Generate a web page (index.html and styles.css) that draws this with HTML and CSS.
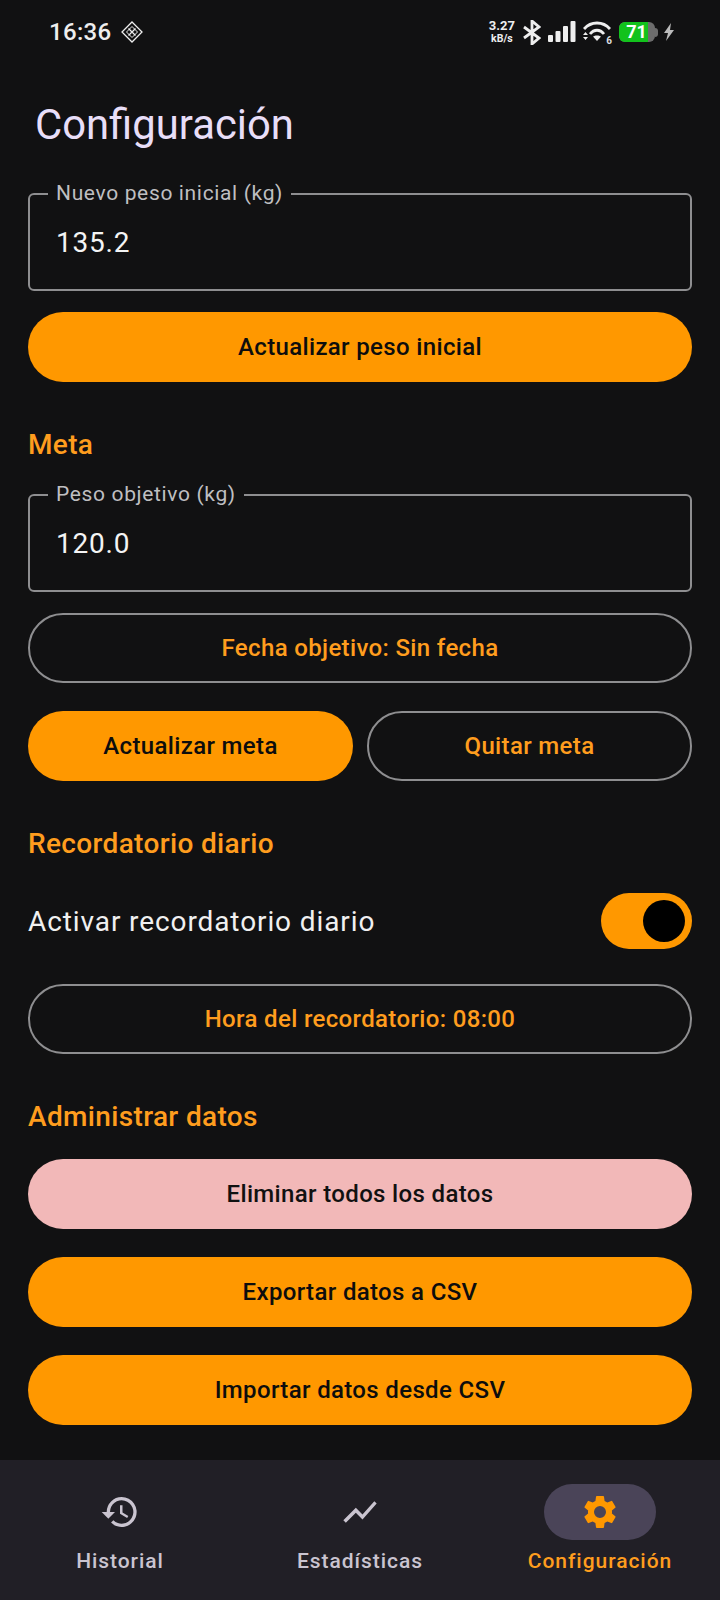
FILE: index.html
```html
<!DOCTYPE html>
<html lang="es">
<head>
<meta charset="utf-8">
<title>Configuración</title>
<link rel="stylesheet" href="styles.css">
</head>
<body>
<div class="status">
  <div class="status-left">
    <span class="clock">16:36</span>
    <svg class="diamond" viewBox="0 0 22 22" fill="none" stroke="#eee" stroke-width="1.300"><path d="M11 1 21 11 11 21 1 11Z"/><path d="M7.500 7.500 14.500 14.500M14.500 7.500 7.500 14.500"/><path d="M11 5.500 16.500 11 11 16.500 5.500 11Z" stroke-width="1"/></svg>
  </div>
  <div class="status-right">
    <span class="speed"><b>3.27</b><b class="unit">kB/s</b></span>
    <svg class="bt" viewBox="0 0 18 25" fill="none" stroke="#eee" stroke-width="2.800"><path d="M1 7 16 18 9 24V1L16 7 1 18"/></svg>
    <svg class="bars" viewBox="0 0 28 22" fill="#eee"><rect x="0" y="14" width="5" height="7" rx="1"/><rect x="7.500" y="10" width="5" height="11" rx="1"/><rect x="15" y="5" width="5" height="16" rx="1"/><rect x="22.500" y="0" width="5" height="21" rx="1"/></svg>
    <span class="wifi-box">
      <svg class="wifi" viewBox="0 0 28 22" fill="none" stroke="#eee" stroke-width="2.800"><path d="M1 8C8 0 20 0 27 8"/><path d="M7 13C11 8 17 8 21 13"/><path d="M14 20 10 15.500C12 14 16 14 18 15.500Z" fill="#eee" stroke="none"/><path d="M0 14 2.500 11 5 14ZM0 16 2.500 19 5 16Z" fill="#eee" stroke="none"/></svg>
      <span class="six">6</span>
    </span>
    <span class="battery"><span class="level">71</span></span><span class="nub"></span>
    <svg class="bolt" viewBox="0 0 12 20" fill="#bbb"><path d="M8 1 1 11H5L3 19 11 8H7Z"/></svg>
  </div>
</div>

<main class="content">
  <h1 class="title">Configuración</h1>

  <div class="field"><span class="field-label">Nuevo peso inicial (kg)</span><span class="field-value">135.2</span></div>
  <button class="btn solid gap-top">Actualizar peso inicial</button>

  <h2 class="section">Meta</h2>
  <div class="field"><span class="field-label">Peso objetivo (kg)</span><span class="field-value">120.0</span></div>
  <button class="btn outline gap-top">Fecha objetivo: Sin fecha</button>
  <div class="pair">
    <button class="btn solid">Actualizar meta</button>
    <button class="btn outline">Quitar meta</button>
  </div>

  <h2 class="section">Recordatorio diario</h2>
  <div class="toggle-row">
    <span class="toggle-label">Activar recordatorio diario</span>
    <span class="switch"><span class="thumb"></span></span>
  </div>
  <button class="btn outline time">Hora del recordatorio: 08:00</button>

  <h2 class="section tight">Administrar datos</h2>
  <div class="stack">
    <button class="btn danger">Eliminar todos los datos</button>
    <button class="btn solid">Exportar datos a CSV</button>
    <button class="btn solid">Importar datos desde CSV</button>
  </div>
</main>

<nav class="nav">
  <div class="tab">
    <span class="pill"><svg viewBox="0 0 24 24" fill="#cac4d0"><path d="M13 3a9 9 0 0 0-9 9H1l3.890 3.890.07.140L9 12H6a7 7 0 1 1 2.050 4.950l-1.420 1.420A9 9 0 1 0 13 3zm-1 5v5l4.280 2.540.72-1.210-3.500-2.080V8H12z"/></svg></span>
    <span class="tab-label">Historial</span>
  </div>
  <div class="tab">
    <span class="pill"><svg viewBox="0 0 24 24" fill="#cac4d0"><path d="M3.500 18.490 9.500 12.480 13.500 16.480 22 6.920 20.590 5.510 13.500 13.480 9.500 9.480 2 16.990Z"/></svg></span>
    <span class="tab-label">Estadísticas</span>
  </div>
  <div class="tab active">
    <span class="pill"><svg viewBox="0 0 24 24" fill="#ff9800"><path d="M19.140 12.940c.04-.3.060-.61.060-.94s-.02-.64-.07-.94l2.030-1.580a.49.49 0 0 0 .12-.61l-1.920-3.320a.49.49 0 0 0-.59-.22l-2.390.96a7 7 0 0 0-1.620-.94l-.36-2.540a.48.48 0 0 0-.48-.41h-3.840a.48.48 0 0 0-.47.41l-.36 2.540c-.59.24-1.130.57-1.620.94l-2.390-.96a.48.48 0 0 0-.59.22L2.740 8.870a.48.48 0 0 0 .12.61l2.030 1.580c-.05.3-.09.63-.09.94s.02.64.07.94l-2.030 1.580a.49.49 0 0 0-.12.61l1.920 3.320c.12.22.37.29.59.22l2.390-.96c.5.380 1.030.7 1.620.94l.36 2.540c.05.24.24.41.48.41h3.840c.24 0 .44-.17.47-.41l.36-2.540c.59-.24 1.130-.56 1.620-.94l2.390.96c.22.080.47 0 .59-.22l1.920-3.320a.48.48 0 0 0-.12-.61l-2.010-1.580zM12 15.600A3.600 3.600 0 1 1 12 8.400a3.600 3.600 0 0 1 0 7.200z"/></svg></span>
    <span class="tab-label">Configuración</span>
  </div>
</nav>
</body>
</html>
```

FILE: styles.css
```css
* { box-sizing: border-box; }
html, body { margin: 0; height: 100%; }
body {
  width: 720px;
  height: 1600px;
  background: #111112;
  color: #fff;
  font-family: Roboto, "Noto Sans", sans-serif;
  display: flex;
  flex-direction: column;
  overflow: hidden;
}

.status {
  height: 64px;
  padding: 17px 45px 0 49px;
  display: flex;
  justify-content: space-between;
  align-items: flex-start;
  flex: none;
}
.status-left { display: flex; align-items: center; gap: 10px; height: 30px; }
.clock { font-size: 24px; font-weight: 500; color: #eee; letter-spacing: .3px; }
.diamond { width: 22px; height: 22px; }
.status-right { display: flex; align-items: center; height: 30px; }
.speed { display: flex; flex-direction: column; align-items: center; line-height: 13px; font-size: 13px; color: #eee; margin-right: 8px; }
.speed b { font-weight: 700; }
.speed .unit { font-size: 10.500px; }
.bt { width: 18px; height: 25px; margin-right: 7px; }
.bars { width: 28px; height: 22px; margin-right: 7px; }
.wifi-box { position: relative; width: 28px; height: 22px; margin-right: 8px; }
.wifi { width: 28px; height: 22px; display: block; }
.six { position: absolute; right: -1px; bottom: -3px; font-size: 10px; line-height: 10px; font-weight: 700; color: #ddd; }
.battery { width: 36px; height: 20px; border-radius: 6px; background: #6c6c6c; overflow: hidden; display: block; }
.level { display: block; width: 29px; height: 20px; background: #12c21c; color: #fff; font-size: 18px; font-weight: 700; line-height: 20px; text-align: center; padding-left: 6px; }
.nub { width: 3px; height: 9px; background: #6c6c6c; border-radius: 0 3px 3px 0; margin-right: 5px; }
.bolt { width: 12px; height: 20px; }

.content {
  flex: 1;
  padding: 0 28px;
  display: flex;
  flex-direction: column;
}
.title {
  margin: 36px 0 0 7px;
  font-size: 41.800px;
  line-height: 50px;
  font-weight: 400;
  color: #e8def8;
  height: 93px;
}

.field {
  position: relative;
  height: 98px;
  border: 2px solid #8e8e90;
  border-radius: 6px;
  padding: 0 26px;
  display: flex;
  align-items: center;
}
.field-label {
  position: absolute;
  top: -14px;
  left: 18px;
  padding: 0 8px;
  background: #111112;
  color: #bfbfc1;
  font-size: 21px;
  line-height: 24px;
  letter-spacing: .65px;
}
.field-value { font-size: 28px; letter-spacing: .8px; color: #f4f4f4; }

.btn {
  display: block;
  width: 100%;
  height: 70px;
  border-radius: 35px;
  font-family: inherit;
  font-size: 24px;
  font-weight: 500;
  letter-spacing: .35px;
  padding: 0;
  cursor: pointer;
  border: 0;
}
.solid { background: #ff9800; color: #0d0d0d; }
.danger { background: #f2b8b8; color: #111; }
.outline { background: transparent; border: 2px solid #8e8e90; color: #ff9d1e; }
.gap-top { margin-top: 21px; }
.time { margin-top: 35px; }

.section {
  margin: 0;
  font-size: 28px;
  line-height: 34px;
  font-weight: 500;
  letter-spacing: .35px;
  color: #ff9d1e;
  padding: 46px 0 32px;
}
.section.tight { padding-bottom: 25px; }

.pair { display: grid; grid-template-columns: 1fr 1fr; gap: 14px; margin-top: 28px; }

.toggle-row { display: flex; justify-content: space-between; align-items: center; height: 56px; }
.toggle-label { font-size: 28px; letter-spacing: .9px; color: #f0f0f0; }
.switch { width: 91px; height: 56px; border-radius: 28px; background: #ff9800; display: flex; justify-content: flex-end; align-items: center; padding-right: 7px; }
.thumb { width: 42px; height: 42px; border-radius: 50%; background: #000; }

.stack { display: flex; flex-direction: column; gap: 28px; }

.nav {
  flex: none;
  height: 140px;
  background: #211f26;
  display: grid;
  grid-template-columns: repeat(3, 1fr);
}
.tab { display: flex; flex-direction: column; align-items: center; padding-top: 24px; }
.pill { width: 112px; height: 56px; border-radius: 28px; display: flex; align-items: center; justify-content: center; }
.pill svg { width: 40px; height: 40px; }
.active .pill { background: #4a4458; }
.tab-label { margin-top: 7px; font-size: 21px; line-height: 28px; font-weight: 500; letter-spacing: .95px; color: #cac4d0; }
.active .tab-label { color: #ff9d1e; }
```
